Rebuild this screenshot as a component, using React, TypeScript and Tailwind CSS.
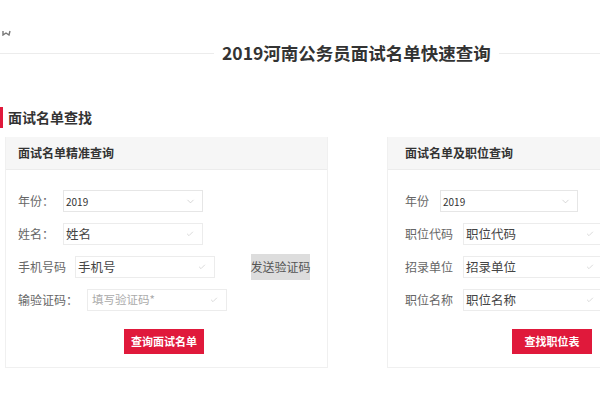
import { ChevronDown, Check } from "lucide-react";

const font = { fontFamily: '"Noto Sans CJK SC", "Noto Sans", sans-serif' };

function SelectBox({ value, width }: { value: string; width: string }) {
  return (
    <div
      className={`${width} h-[22px] flex items-center justify-between border border-[#e6e6e6] bg-white pl-[2px] pr-[6px]`}
    >
      <span className="text-[10px] text-[#333]">{value}</span>
      <ChevronDown className="h-[11px] w-[11px] text-[#c4c4c4]" strokeWidth={1.5} />
    </div>
  );
}

function TextBox({
  value,
  placeholder,
  width,
}: {
  value?: string;
  placeholder?: string;
  width: string;
}) {
  return (
    <div
      className={`${width} h-[22px] flex items-center justify-between border border-[#ececec] bg-white pl-[2px] pr-[8px]`}
    >
      {value ? (
        <span className="text-[12.5px] text-[#444]">{value}</span>
      ) : (
        <span className="text-[11.5px] text-[#aaa] pl-[2px]">{placeholder}</span>
      )}
      <Check className="h-[8px] w-[8px] text-[#c8c8c8]" strokeWidth={2} />
    </div>
  );
}

function Row({ label, gap, children }: { label: string; gap: string; children: React.ReactNode }) {
  return (
    <div className={`flex h-[22px] items-center ${gap}`}>
      <span className="text-[12px] text-[#666] whitespace-nowrap">{label}</span>
      {children}
    </div>
  );
}

function RedButton({ text, className }: { text: string; className: string }) {
  return (
    <div
      className={`h-[25px] w-[80px] flex items-center justify-center bg-[#e0193b] text-[11px] font-bold text-white ${className}`}
    >
      {text}
    </div>
  );
}

export default function App() {
  return (
    <div className="w-[600px] h-[400px] overflow-hidden bg-white" style={font}>
      {/* logo scrap */}
      <div className="h-[40px] pt-[30px] pl-[2px]">
        <svg width="9" height="6" viewBox="0 0 9 6" fill="none">
          <path d="M1 1 L1 5 L4 3 L7 5 L8 1" stroke="#777" strokeWidth="1.4" />
        </svg>
      </div>

      {/* title */}
      <div className="flex h-[26px] items-center">
        <div className="h-px w-[214px] shrink-0 bg-[#ececec]" />
        <h1 className="px-[8px] text-[17.5px] font-bold text-[#333] whitespace-nowrap">
          2019河南公务员面试名单快速查询
        </h1>
        <div className="h-px flex-1 bg-[#ececec]" />
      </div>

      {/* section heading */}
      <div className="mt-[41px] flex h-[21px] items-center">
        <div className="h-[21px] w-[3px] bg-[#e0193b]" />
        <h2 className="ml-[5px] text-[14px] font-bold text-[#333]">面试名单查找</h2>
      </div>

      <div className="mt-[9px] flex">
        {/* left panel */}
        <div className="ml-[5px] w-[323px] shrink-0 border-x border-b border-[#f0f0f0] pb-[13px]">
          <div className="flex h-[33px] items-center border-b border-[#ececec] bg-[#f6f6f6] pl-[12px]">
            <span className="text-[12px] font-bold text-[#333]">面试名单精准查询</span>
          </div>
          <div className="flex flex-col gap-[11px] pl-[12px] pt-[20px]">
            <Row label="年份：" gap="gap-[9px]">
              <SelectBox value="2019" width="w-[140px]" />
            </Row>
            <Row label="姓名：" gap="gap-[9px]">
              <TextBox value="姓名" width="w-[140px]" />
            </Row>
            <Row label="手机号码" gap="gap-[9px]">
              <TextBox value="手机号" width="w-[140px]" />
              <div className="ml-[27px] flex h-[26px] w-[59px] items-center justify-center bg-[#dddddd] text-[12px] text-[#555] whitespace-nowrap">
                发送验证码
              </div>
            </Row>
            <Row label="输验证码：" gap="gap-[9px]">
              <TextBox placeholder="填写验证码*" width="w-[140px]" />
            </Row>
          </div>
          <RedButton text="查询面试名单" className="ml-[118px] mt-[18px]" />
        </div>

        {/* right panel */}
        <div className="ml-[59px] w-[240px] shrink-0 border-x border-b border-[#f0f0f0] pb-[13px]">
          <div className="flex h-[33px] items-center border-b border-[#ececec] bg-[#f6f6f6] pl-[17px]">
            <span className="text-[12px] font-bold text-[#333]">面试名单及职位查询</span>
          </div>
          <div className="flex flex-col gap-[11px] pl-[17px] pt-[20px]">
            <Row label="年份" gap="gap-[11px]">
              <SelectBox value="2019" width="w-[138px]" />
            </Row>
            <Row label="职位代码" gap="gap-[10px]">
              <TextBox value="职位代码" width="w-[140px]" />
            </Row>
            <Row label="招录单位" gap="gap-[10px]">
              <TextBox value="招录单位" width="w-[140px]" />
            </Row>
            <Row label="职位名称" gap="gap-[10px]">
              <TextBox value="职位名称" width="w-[140px]" />
            </Row>
          </div>
          <RedButton text="查找职位表" className="ml-[124px] mt-[18px]" />
        </div>
      </div>
    </div>
  );
}
